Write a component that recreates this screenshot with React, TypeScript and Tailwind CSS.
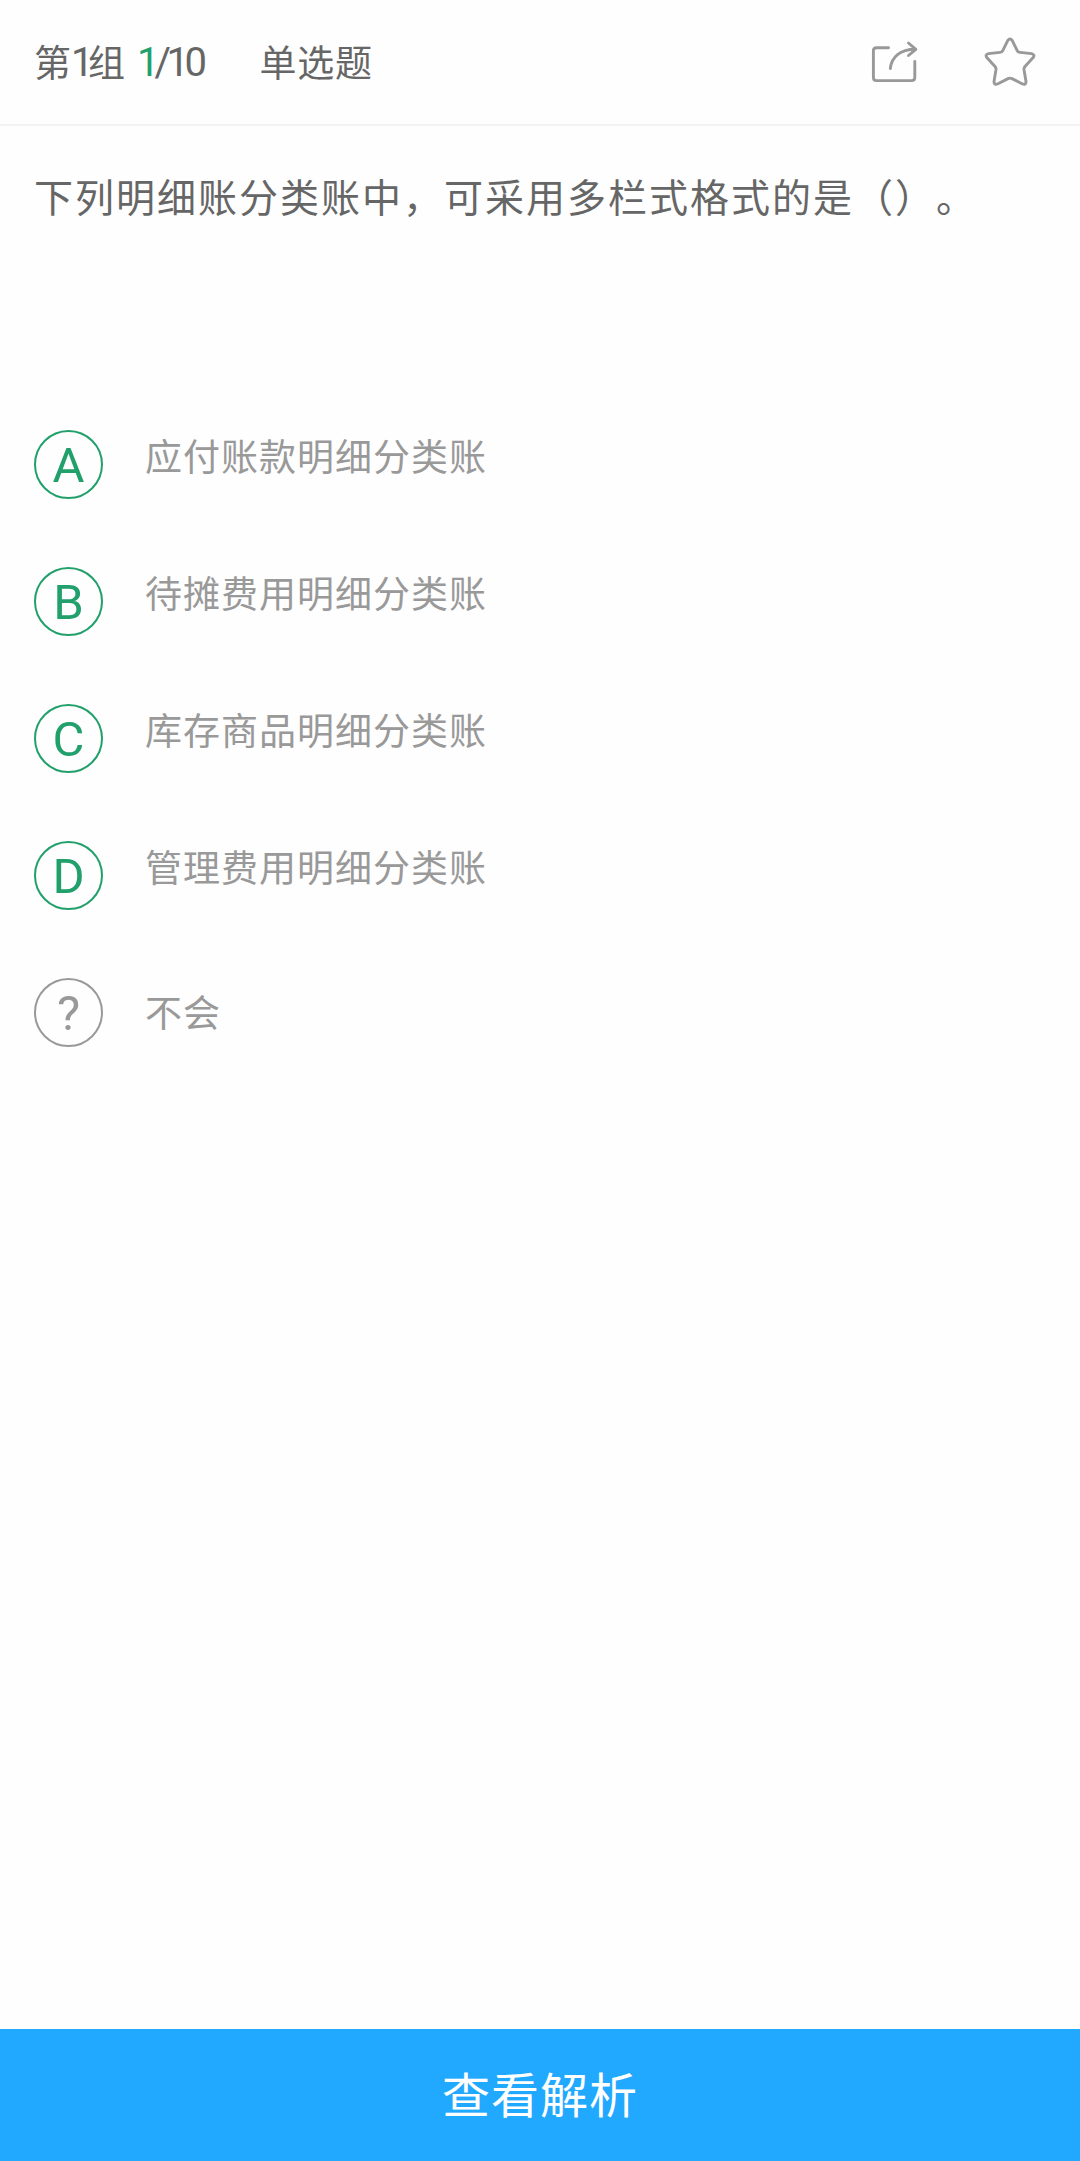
interface OptionProps {
    letter: string
    text: string
    unknown?: boolean
}

const options: OptionProps[] = [
    { letter: "A", text: "应付账款明细分类账" },
    { letter: "B", text: "待摊费用明细分类账" },
    { letter: "C", text: "库存商品明细分类账" },
    { letter: "D", text: "管理费用明细分类账" },
    { letter: "?", text: "不会", unknown: true },
]

function ShareIcon(){
    return (
        <svg width="48" height="44" viewBox="0 0 48 44" fill="none" stroke="#999999" strokeWidth="2.9" strokeLinecap="round" strokeLinejoin="round">
            <path d="M18.500 7.700H6.500Q3.400 7.700 3.400 10.800V37.500Q3.400 40.600 6.500 40.600H41.500Q44.800 40.600 44.800 37.500V21.500" />
            <path d="M20.300 28.500C21.500 17 30 9.300 45.500 9.300" />
            <path d="M38.500 3L45.800 9.300L38.500 15.500" />
        </svg>
    )
}

function StarIcon(){
    return (
        <svg width="52" height="50" viewBox="0 0 52 50" fill="none" stroke="#999999" strokeWidth="2.9" strokeLinejoin="round">
            <path d="M23.800 3.300Q26 0.600 28.200 3.300L33.200 13.600Q34 15.200 36 15.400L47.500 16.600Q51.200 17.600 49.200 20.600L41.200 29.200Q39.800 30.800 40 32.500L42 44.500Q42 48.200 38.500 47L28 41.600Q26 40.700 24 41.600L13.500 47Q10 48.200 10 44.500L12 32.500Q12.200 30.800 10.800 29.200L2.800 20.600Q0.800 17.600 4.500 16.600L16 15.400Q18 15.200 18.800 13.600Z" />
        </svg>
    )
}

function Navbar(){
    return (
        <header className="flex items-center justify-between h-[126px] pl-[34px] pr-[44px] border-b-2 border-[#f3f3f3] text-[#666666] text-[37px]">
            <div className="flex items-center leading-[54px] pb-[3px]">
                <span>第</span>
                <span className="font-[Roboto] text-[40px] tracking-[-5.5px] pt-[5px]">1</span>
                <span>组</span>
                <span className="ml-[12px] font-[Roboto] text-[40px] tracking-[-5px] pt-[5px] text-[#22a06b]">1</span>
                <span className="font-[Roboto] text-[40px] tracking-[-4.5px] pt-[5px]">/10</span>
                <span className="ml-[57px] tracking-[0.8px]">单选题</span>
            </div>
            <div className="flex items-center gap-[66px]">
                <ShareIcon/>
                <StarIcon/>
            </div>
        </header>
    )
}

function Option({ letter, text, unknown }: OptionProps){
    return (
        <li className="flex items-center h-[69px] gap-[42px]">
            <span className={`flex items-center justify-center size-[69px] rounded-full border-2 font-[Roboto] text-[49px] leading-none pt-px ${unknown ? "border-[#999999] text-[#999999]" : "border-[#22a06b] text-[#22a06b]"}`}>
                {letter}
            </span>
            <span className={`text-[37px] leading-[54px] tracking-[1px] text-[#999999] ${unknown ? "pb-[4px]" : "pb-[20px]"}`}>
                {text}
            </span>
        </li>
    )
}

export default function App(){
    return (
        <main className="flex flex-col w-full h-[2161px] bg-[#fefefe] font-['Noto_Sans_CJK_SC',sans-serif]">
            <Navbar/>

            <section className="flex flex-col flex-1 px-[34px] pt-[40px]">
                <h1 className="h-[264px] text-[39px] leading-[58px] tracking-[2px] text-[#666666] whitespace-nowrap [text-spacing-trim:space-all]">
                    下列明细账分类账中，可采用多栏式格式的是（）。
                </h1>

                <ul className="flex flex-col gap-[68px]">
                    {options.map((item) => (
                        <Option key={item.letter} {...item} />
                    ))}
                </ul>
            </section>

            <button className="h-[132px] shrink-0 pb-[6px] bg-[#21a8ff] text-white text-[48px] tracking-[1px]">
                查看解析
            </button>
        </main>
    )
}
